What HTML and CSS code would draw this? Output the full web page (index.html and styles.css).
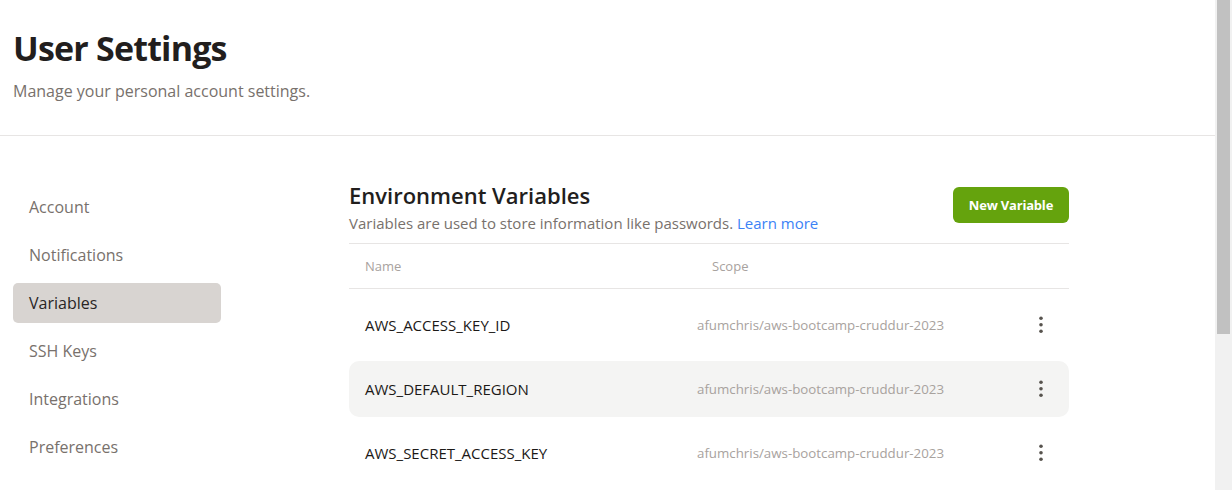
FILE: index.html
```html
<!DOCTYPE html>
<html lang="en">
<head>
<meta charset="utf-8">
<title>User Settings</title>
<link rel="stylesheet" href="styles.css">
</head>
<body>
<div class="app">
  <div class="page">
    <header class="page-header">
      <h1 class="page-title">User Settings</h1>
      <p class="page-subtitle">Manage your personal account settings.</p>
    </header>

    <div class="layout">
      <nav class="sidebar">
        <a class="nav-item" href="#">Account</a>
        <a class="nav-item" href="#">Notifications</a>
        <a class="nav-item nav-item--active" href="#">Variables</a>
        <a class="nav-item" href="#">SSH Keys</a>
        <a class="nav-item" href="#">Integrations</a>
        <a class="nav-item" href="#">Preferences</a>
      </nav>

      <main class="content">
        <div class="section-head">
          <div class="section-text">
            <h2 class="section-title">Environment Variables</h2>
            <p class="section-desc">Variables are used to store information like passwords. <a class="link" href="#">Learn more</a></p>
          </div>
          <button class="btn-primary" type="button">New Variable</button>
        </div>

        <div class="table">
          <div class="table-head">
            <span class="th">Name</span>
            <span class="th">Scope</span>
          </div>
          <div class="table-body">
            <div class="row">
              <span class="cell-name">AWS_ACCESS_KEY_ID</span>
              <span class="cell-scope">afumchris/aws-bootcamp-cruddur-2023</span>
              <button class="kebab" type="button" aria-label="More">
                <svg width="4" height="18" viewBox="0 0 4 18"><circle cx="2" cy="2.2" r="1.8"/><circle cx="2" cy="8.7" r="1.8"/><circle cx="2" cy="15.2" r="1.8"/></svg>
              </button>
            </div>
            <div class="row row--hover">
              <span class="cell-name">AWS_DEFAULT_REGION</span>
              <span class="cell-scope">afumchris/aws-bootcamp-cruddur-2023</span>
              <button class="kebab" type="button" aria-label="More">
                <svg width="4" height="18" viewBox="0 0 4 18"><circle cx="2" cy="2.2" r="1.8"/><circle cx="2" cy="8.7" r="1.8"/><circle cx="2" cy="15.2" r="1.8"/></svg>
              </button>
            </div>
            <div class="row">
              <span class="cell-name">AWS_SECRET_ACCESS_KEY</span>
              <span class="cell-scope">afumchris/aws-bootcamp-cruddur-2023</span>
              <button class="kebab" type="button" aria-label="More">
                <svg width="4" height="18" viewBox="0 0 4 18"><circle cx="2" cy="2.2" r="1.8"/><circle cx="2" cy="8.7" r="1.8"/><circle cx="2" cy="15.2" r="1.8"/></svg>
              </button>
            </div>
          </div>
        </div>
      </main>
    </div>
  </div>

  <div class="scrollbar" aria-hidden="true">
    <div class="scrollbar-thumb"></div>
  </div>
</div>
</body>
</html>
```

FILE: styles.css
```css
html,
body {
  margin: 0;
  height: 100%;
  overflow: hidden;
  background: #ffffff;
}

body {
  font-family: "Open Sans", "Noto Sans", sans-serif;
  color: #1c1917;
}

.app {
  display: flex;
  height: 100vh;
}

.page {
  flex: 1;
  min-width: 0;
}

.scrollbar {
  width: 13px;
  flex: none;
  padding: 0 2px;
  background: #f1f1f1;
}

.scrollbar-thumb {
  height: 334px;
  background: #c1c1c1;
}

.page-header {
  padding: 28px 13px 32px;
  border-bottom: 1px solid #e7e5e4;
}

.page-title {
  margin: 0;
  font-size: 34px;
  line-height: 40px;
  font-weight: 700;
  color: #221e1d;
  letter-spacing: -0.8px;
}

.page-subtitle {
  margin: 11px 0 0;
  font-size: 16px;
  line-height: 24px;
  color: #78716c;
}

.layout {
  display: flex;
  gap: 128px;
  padding: 43px 0 0 13px;
}

.sidebar {
  width: 208px;
  flex: none;
  display: flex;
  flex-direction: column;
  gap: 8px;
  padding-top: 8px;
}

.nav-item {
  display: flex;
  align-items: center;
  height: 40px;
  padding-left: 16px;
  border-radius: 5px;
  font-size: 16px;
  color: #78716c;
  text-decoration: none;
}

.nav-item--active {
  background: #d8d4d1;
  color: #292524;
}

.content {
  width: 720px;
  flex: none;
}

.section-head {
  display: flex;
  justify-content: space-between;
  align-items: flex-start;
}

.section-title {
  margin: 0;
  font-size: 22px;
  line-height: 32px;
  font-weight: 600;
  color: #221e1d;
}

.section-desc {
  margin: 2px 0 0;
  font-size: 15px;
  line-height: 20px;
  color: #78716c;
}

.link {
  color: #3b82f6;
  text-decoration: none;
}

.btn-primary {
  margin-top: 8px;
  height: 36px;
  width: 116px;
  border: none;
  border-radius: 6px;
  background: #65a30d;
  color: #ffffff;
  font-family: inherit;
  font-size: 13px;
  font-weight: 700;
  letter-spacing: -0.2px;
  cursor: pointer;
}

.table {
  margin-top: 10px;
  border-top: 1px solid #e7e5e4;
}

.table-head {
  display: grid;
  grid-template-columns: 347px 1fr;
  align-items: center;
  height: 44px;
  padding-left: 16px;
  border-bottom: 1px solid #e7e5e4;
}

.th {
  font-size: 13px;
  color: #a8a29e;
}

.table-body {
  display: flex;
  flex-direction: column;
  gap: 8px;
  padding-top: 8px;
}

.row {
  display: grid;
  grid-template-columns: 332px 1fr 24px;
  align-items: center;
  height: 56px;
  padding: 0 16px;
  border-radius: 10px;
}

.row--hover {
  background: #f4f4f3;
}

.cell-name {
  font-size: 15px;
  color: #1c1917;
}

.cell-scope {
  font-size: 13.3px;
  color: #a8a29e;
}

.kebab {
  display: flex;
  align-items: center;
  justify-content: center;
  width: 24px;
  height: 24px;
  padding: 0;
  border: none;
  background: transparent;
  fill: #57534e;
  cursor: pointer;
}
```
